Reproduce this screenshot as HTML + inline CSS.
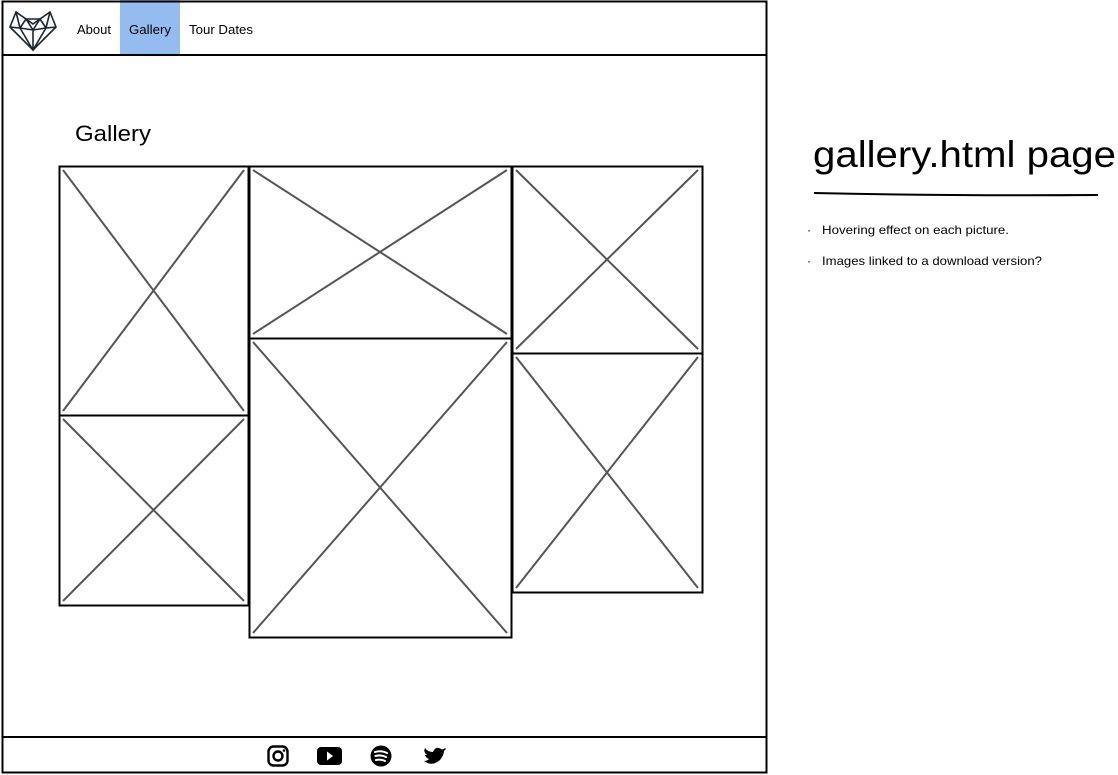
<!DOCTYPE html>
<html><head><meta charset="utf-8"><style>
body{margin:0;background:#fff;width:1118px;height:775px;overflow:hidden;font-family:"Liberation Sans",sans-serif}
</style></head><body>
<svg width="1118" height="775" xmlns="http://www.w3.org/2000/svg" style="position:absolute;left:0;top:0">
<rect x="120" y="0" width="60" height="55" fill="#94bcf1"/>
<rect x="2.5" y="1.5" width="764" height="771" fill="none" stroke="#000" stroke-width="2"/>
<line x1="2" y1="55" x2="767" y2="55" stroke="#000" stroke-width="2"/>
<line x1="2" y1="737" x2="767" y2="737" stroke="#000" stroke-width="2"/>
<g fill="none" stroke="#1a2530" stroke-width="1.6">
<path d="M10 27 L16 12 L26 19 L33 24 L40 19 L50 12 L56 27 L33 50 Z"/>
<path d="M16 12 L20 28 L33 50 L46 28 L50 12 M10 27 L20 28 L26 19 L33 30 L40 19 L46 28 L56 27 M20 28 L33 30 L46 28 M33 30 L33 50 M26 19 L40 19"/>
</g>
<g font-size="13" fill="#000">
<text x="77" y="34" textLength="34" lengthAdjust="spacingAndGlyphs">About</text>
<text x="129" y="34" textLength="42" lengthAdjust="spacingAndGlyphs">Gallery</text>
<text x="189" y="34" textLength="64" lengthAdjust="spacingAndGlyphs">Tour Dates</text>
</g>
<text x="75" y="141" font-size="22" fill="#000" textLength="76" lengthAdjust="spacingAndGlyphs">Gallery</text>
<g stroke="#555" stroke-width="2" fill="none">
<path d="M63 170 L244 411 M244 170 L63 411"/>
<path d="M63 419 L244 601 M244 419 L63 601"/>
<path d="M253 170 L507 334 M507 170 L253 334"/>
<path d="M253 342 L507 633 M507 342 L253 633"/>
<path d="M516 170 L698 349 M698 170 L516 349"/>
<path d="M516 357 L698 588 M698 357 L516 588"/>
</g>
<g stroke="#000" stroke-width="2" fill="none">
<rect x="59.5" y="166.5" width="189" height="249"/>
<rect x="59.5" y="415.5" width="189" height="190"/>
<rect x="249.5" y="166.5" width="262" height="172"/>
<rect x="249.5" y="338.5" width="262" height="299"/>
<rect x="512.5" y="166.5" width="190" height="187"/>
<rect x="512.5" y="353.5" width="190" height="239"/>
</g>
<rect x="268.5" y="746.5" width="19" height="19" rx="5" fill="none" stroke="#000" stroke-width="2.4"/>
<circle cx="278" cy="756" r="4.5" fill="none" stroke="#000" stroke-width="2.4"/>
<circle cx="284" cy="750.5" r="1.3"/>
<rect x="317" y="747" width="25" height="18" rx="4" fill="#000"/>
<path d="M327 751.5 L333 756 L327 760.5 Z" fill="#fff"/>
<circle cx="381" cy="756" r="10.5" fill="#000"/>
<g stroke="#fff" stroke-width="2" fill="none" stroke-linecap="round"><path d="M375 752 Q381 750 387 753"/><path d="M375.5 756 Q381 754.5 386 757"/><path d="M376 760 Q381 759 385 761"/></g>
<path d="M445 748 Q443 750 441 749 Q437 746 434 750 L433 752 Q428 752 425 748 Q423 752 427 755 L425 755 Q426 758 429 759 Q427 761 424 761 Q432 767 440 760 Q444 755 444 751 L446 749 Z" fill="#000"/>
<text x="813" y="167" font-size="37" fill="#000" textLength="303" lengthAdjust="spacingAndGlyphs">gallery.html page</text>
<path d="M814 193 Q950 196 1098 195" stroke="#000" stroke-width="2" fill="none"/>
<g font-size="12" fill="#000">
<text x="807" y="234">·</text><text x="822" y="234" textLength="187" lengthAdjust="spacingAndGlyphs">Hovering effect on each picture.</text>
<text x="807" y="265">·</text><text x="822" y="265" textLength="220" lengthAdjust="spacingAndGlyphs">Images linked to a download version?</text>
</g>
</svg>
</body></html>
